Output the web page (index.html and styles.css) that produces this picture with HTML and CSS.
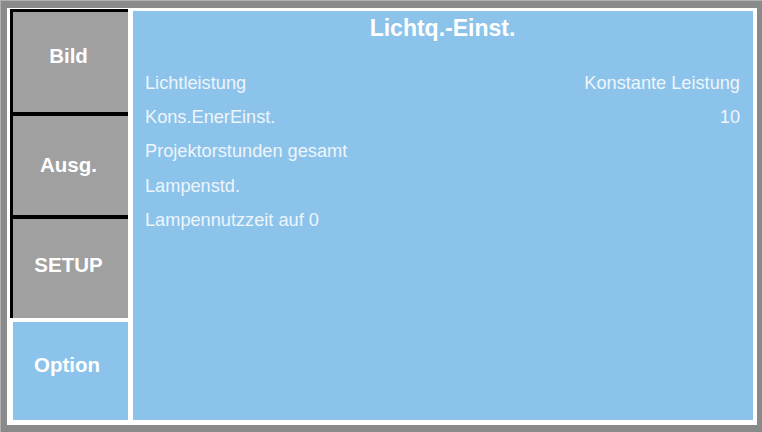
FILE: index.html
```html
<!DOCTYPE html>
<html lang="de">
<head>
<meta charset="utf-8">
<title>Lichtq.-Einst.</title>
<link rel="stylesheet" href="styles.css">
</head>
<body>
<div class="screen">
  <div class="inner">
    <nav class="tabs">
      <div class="dark-group">
        <div class="tab tab-bild"><span>Bild</span></div>
        <div class="tab tab-ausg"><span>Ausg.</span></div>
        <div class="tab tab-setup"><span>SETUP</span></div>
      </div>
      <div class="tab tab-option"><span>Option</span></div>
    </nav>
    <main class="panel">
      <h1 class="title">Lichtq.-Einst.</h1>
      <ul class="items">
        <li class="item"><span>Lichtleistung</span><span>Konstante Leistung</span></li>
        <li class="item"><span>Kons.EnerEinst.</span><span>10</span></li>
        <li class="item"><span>Projektorstunden gesamt</span></li>
        <li class="item"><span>Lampenstd.</span></li>
        <li class="item"><span>Lampennutzzeit auf 0</span></li>
      </ul>
    </main>
  </div>
</div>
</body>
</html>
```

FILE: styles.css
```css
html, body {
  margin: 0;
  padding: 0;
}

body {
  width: 762px;
  height: 432px;
  overflow: hidden;
  font-family: "Liberation Sans", Arial, sans-serif;
}

.screen {
  box-sizing: border-box;
  width: 762px;
  height: 432px;
  padding: 8px 5px 7px 7px;
  background: #8a8a8a;
  border-top: 1px solid #b0b0b0;
  border-left: 1px solid #b0b0b0;
}

.screen {
  padding: 7px 5px 7px 6px;
}

.inner {
  box-sizing: border-box;
  height: 100%;
  background: #ffffff;
  display: flex;
  align-items: flex-start;
  padding: 1px 4px 0 3px;
}

.tabs {
  width: 118px;
  display: flex;
  flex-direction: column;
  flex: none;
}

.dark-group {
  display: flex;
  flex-direction: column;
}

.tab {
  box-sizing: border-box;
  display: flex;
  align-items: center;
  justify-content: center;
  color: #ffffff;
  font-weight: bold;
  font-size: 20.5px;
  padding-right: 4px;
}

.dark-group .tab {
  background: #a0a0a0;
  border-left: 3px solid #000000;
  border-top: 4px solid #000000;
}

.tab-bild {
  height: 103px;
  padding-bottom: 13px;
}

.dark-group .tab-bild {
  border-top-width: 3px;
}

.tab-ausg {
  height: 103px;
  padding-bottom: 2px;
}

.tab-setup {
  height: 103px;
  padding-bottom: 8px;
}

.tab-option {
  height: 98px;
  margin-top: 4px;
  margin-left: 3px;
  background: #8cc3eb;
  padding-bottom: 13px;
  padding-right: 7px;
}

.panel {
  flex: 1;
  margin-left: 5px;
  margin-top: 2px;
  height: 409px;
  background: #8cc3eb;
  box-sizing: border-box;
  padding: 2px 13px 0 12px;
}

.title {
  margin: 0;
  text-align: center;
  color: #ffffff;
  font-size: 23px;
  line-height: 30px;
  font-weight: bold;
}

.items {
  list-style: none;
  margin: 23px 0 0;
  padding: 0;
}

.item {
  display: flex;
  justify-content: space-between;
  height: 34.2px;
  line-height: 34.2px;
  font-size: 18.2px;
  color: #eef5fb;
}
```
